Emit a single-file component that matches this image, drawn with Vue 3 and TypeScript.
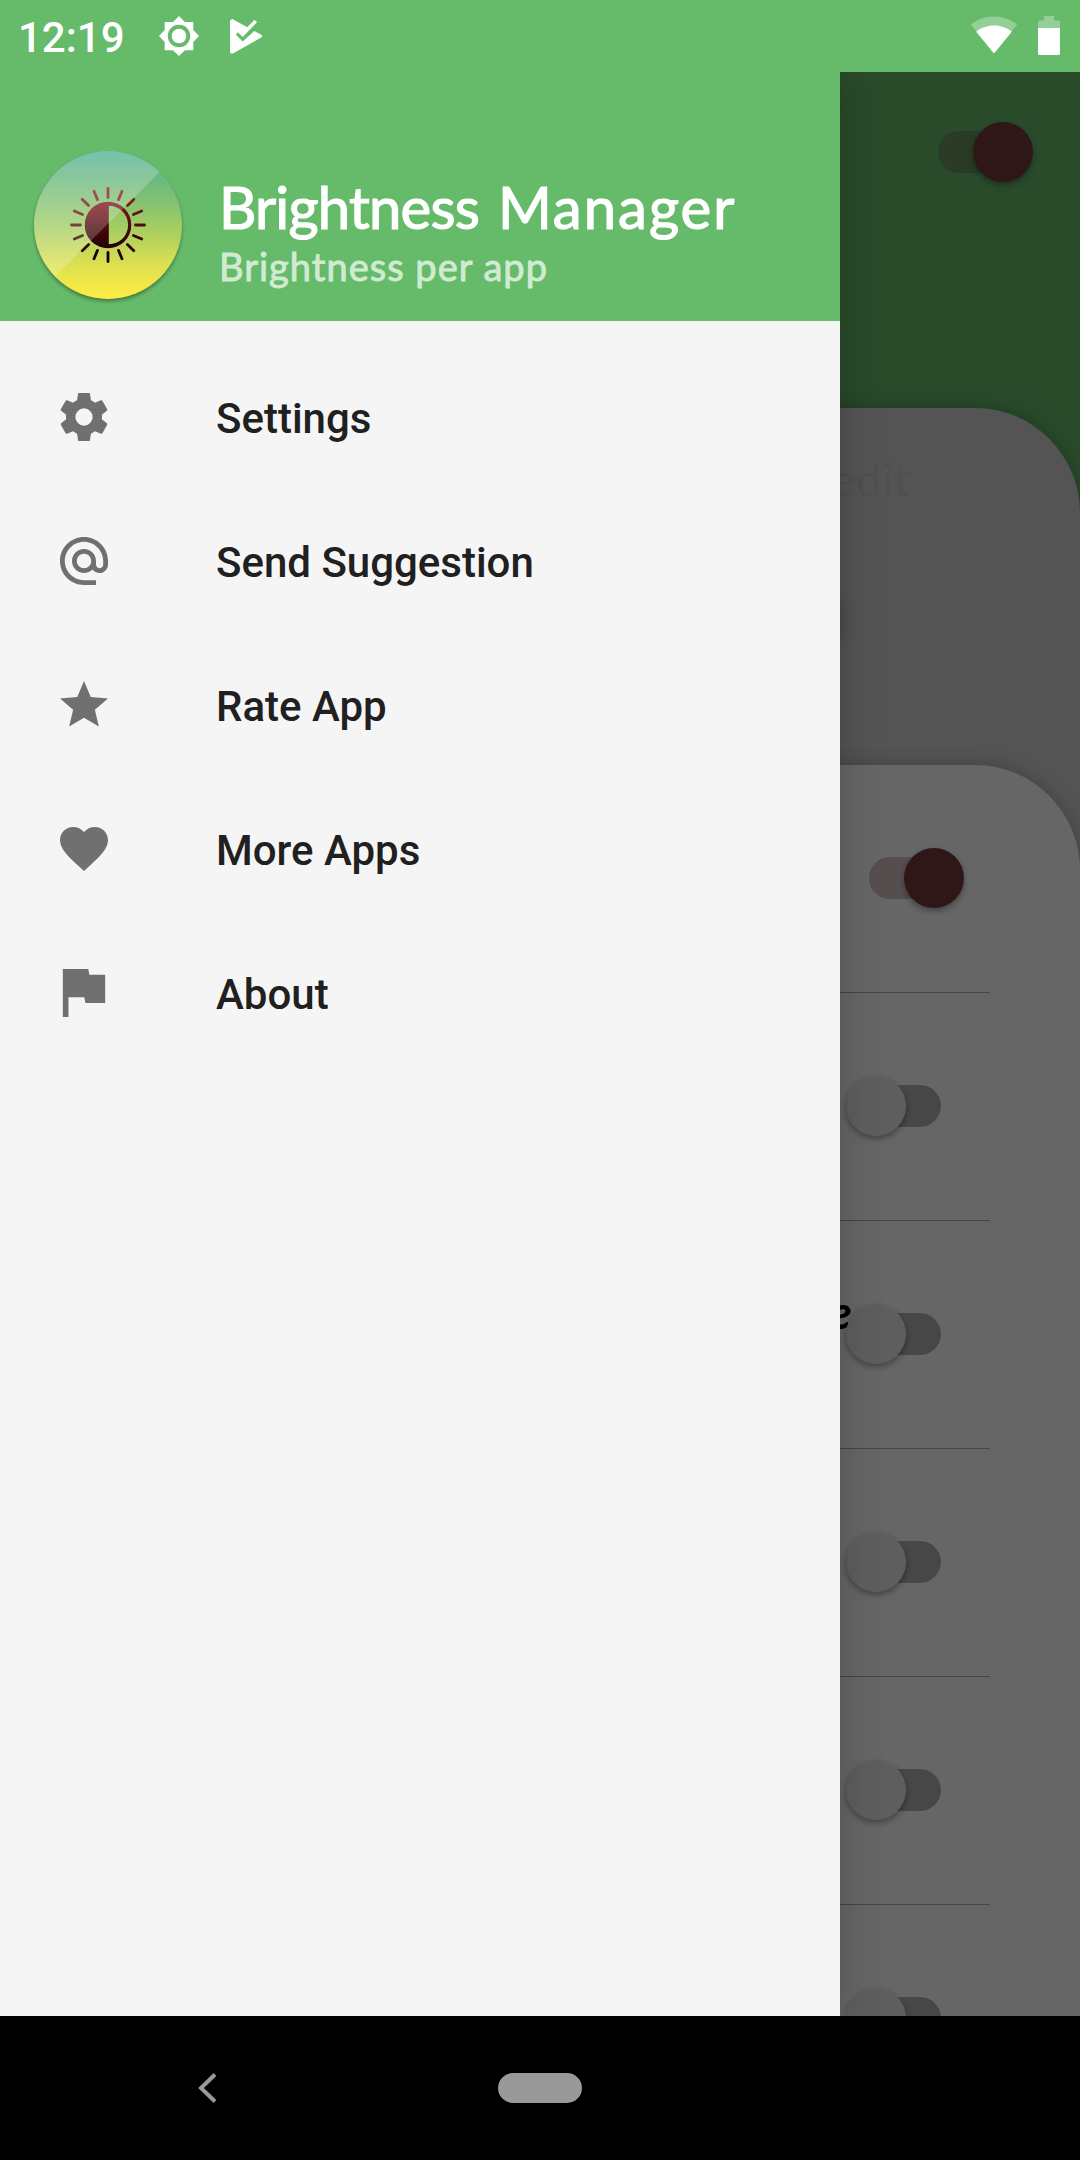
<script setup lang="ts">
interface MenuItem {
  label: string
  box: string
  path: string
}

interface AppRow {
  name: string
  on: boolean
}

const menu: MenuItem[] = [
  {
    label: 'Settings',
    box: '2 2 20 20',
    path: 'M19.43 12.98c.04-.32.07-.64.07-.98s-.03-.66-.07-.98l2.11-1.65c.19-.15.24-.42.12-.64l-2-3.46c-.12-.22-.39-.3-.61-.22l-2.49 1c-.52-.4-1.08-.73-1.69-.98l-.38-2.65C14.46 2.18 14.25 2 14 2h-4c-.25 0-.46.18-.49.42l-.38 2.65c-.61.25-1.17.59-1.69.98l-2.49-1c-.23-.09-.49 0-.61.22l-2 3.46c-.13.22-.07.49.12.64l2.11 1.65c-.04.32-.07.65-.07.98s.03.66.07.98l-2.11 1.65c-.19.15-.24.42-.12.64l2 3.46c.12.22.39.3.61.22l2.49-1c.52.4 1.08.73 1.69.98l.38 2.65c.03.24.24.42.49.42h4c.25 0 .46-.18.49-.42l.38-2.65c.61-.25 1.17-.59 1.69-.98l2.49 1c.23.09.49 0 .61-.22l2-3.46c.12-.22.07-.49-.12-.64l-2.11-1.65zM12 15.6A3.6 3.6 0 1 1 12 8.4a3.6 3.6 0 0 1 0 7.2z',
  },
  {
    label: 'Send Suggestion',
    box: '2 2 20 20',
    path: 'M12 2C6.48 2 2 6.48 2 12s4.48 10 10 10h5v-2h-5c-4.34 0-8-3.66-8-8s3.66-8 8-8 8 3.66 8 8v1.43c0 .79-.71 1.57-1.5 1.57s-1.5-.78-1.5-1.57V12c0-2.76-2.24-5-5-5s-5 2.24-5 5 2.24 5 5 5c1.38 0 2.64-.56 3.54-1.47.65.89 1.77 1.47 2.96 1.47 1.97 0 3.5-1.6 3.5-3.57V12c0-5.52-4.48-10-10-10zm0 13c-1.66 0-3-1.34-3-3s1.34-3 3-3 3 1.34 3 3-1.34 3-3 3z',
  },
  {
    label: 'Rate App',
    box: '2 2 20 20',
    path: 'M12 17.27L18.18 21l-1.64-7.03L22 9.24l-7.19-.61L12 2 9.19 8.63 2 9.24l5.46 4.73L5.82 21z',
  },
  {
    label: 'More Apps',
    box: '2 2.2 20 20',
    path: 'M12 21.35l-1.45-1.32C5.4 15.36 2 12.28 2 8.5 2 5.42 4.42 3 7.5 3c1.74 0 3.41.81 4.5 2.09C13.09 3.81 14.76 3 16.5 3 19.58 3 22 5.42 22 8.5c0 3.78-3.4 6.86-8.55 11.54L12 21.35z',
  },
  {
    label: 'About',
    box: '4 4 17 17',
    path: 'M14.4 6L14 4H5v17h2v-7h5.6l.4 2h7V6z',
  },
]

const rows: AppRow[] = [
  { name: '', on: true },
  { name: '', on: false },
  { name: 'e', on: false },
  { name: '', on: false },
  { name: '', on: false },
  { name: '', on: false },
]

const rays: number[] = Array.from({ length: 16 }, (_, i) => i * 22.5)
</script>

<template>
  <div class="screen">
    <header class="status">
      <span class="clock">12:19</span>
      <svg class="s-sun" width="40" height="40" viewBox="0 0 40 40">
        <path fill="#fff" fill-rule="evenodd" d="M20 0l6 5.9h8.3v8.2L40 20l-5.7 5.9v8.4H26L20 40l-6-5.7H5.700v-8.400L0 20l5.700-5.900V5.900H14zM20 8.800a11.200 11.200 0 1 0 0 22.400a11.200 11.200 0 0 0 0-22.400z" />
        <circle cx="20" cy="20" r="7.300" fill="#fff" />
      </svg>
      <svg class="s-play" width="33" height="35" viewBox="0 0 33 35">
        <path fill="#fff" d="M0 2.500C0 .6 1.700-.4 3.400.5L17.200 8.300 24.600 .8 27 3.200 12.700 17.900 7.700 13.200 5.800 15.400 12.700 22.500 24.300 11.900 31.300 15.800Q33 17 31.300 18.400L3.400 34.200C1.700 35.200 0 34.300 0 32.300z" />
      </svg>
      <span class="grow"></span>
      <svg class="s-wifi" width="46" height="38" viewBox="0 0 46 38">
        <path fill="#fff" fill-opacity=".3" d="M23 37.500L0 8.500C6 3.500 14 .5 23 .5s17 3 23 8z" />
        <path fill="#fff" d="M23 37.500L5.200 15.700C10 12 16 9.600 23 9.600s13 2.400 17.800 6.100L24 36.300q-1 1.200-2 0z" />
      </svg>
      <svg class="s-batt" width="22" height="39" viewBox="0 0 22 39">
        <path fill="#fff" fill-opacity=".3" d="M6 0h10v4.500h4.500Q22 4.500 22 6v6H0V6q0-1.500 1.500-1.500H6z" />
        <path fill="#fff" d="M0 12h22v25.500q0 1.500-1.500 1.500h-19Q0 39 0 37.500z" />
      </svg>
    </header>

    <main class="stage">
      <section class="page">
        <div class="toolbar">
          <div class="switch on"><i class="track"></i><i class="thumb"></i></div>
        </div>
        <div class="panel">
          <div class="hint">edit</div>
          <div class="fab-line"><span class="fab"></span></div>
          <div class="list">
            <div v-for="(row, i) in rows" :key="i" class="row" :class="{ first: row.on }">
              <span class="name">{{ row.name }}</span>
              <div class="switch" :class="{ on: row.on }"><i class="track"></i><i class="thumb"></i></div>
            </div>
          </div>
        </div>
      </section>
      <div class="scrim"></div>

      <aside class="drawer">
        <div class="head">
          <svg class="logo" width="160" height="164" viewBox="-80 -80 160 164">
            <defs>
              <linearGradient id="sky" x1="0" y1="0" x2="0" y2="1">
                <stop offset="0" stop-color="#4fb096" />
                <stop offset=".2" stop-color="#6bb97e" />
                <stop offset=".5" stop-color="#a0cc63" />
                <stop offset=".78" stop-color="#dfe14f" />
                <stop offset="1" stop-color="#ffec42" />
              </linearGradient>
              <linearGradient id="wine" gradientUnits="userSpaceOnUse" x1="0" y1="-38" x2="0" y2="38">
                <stop offset="0" stop-color="#8e2028" />
                <stop offset=".3" stop-color="#741219" />
                <stop offset=".65" stop-color="#360508" />
                <stop offset="1" stop-color="#0c0102" />
              </linearGradient>
              <clipPath id="disc"><circle r="74" /></clipPath>
              <filter id="soft" x="-20%" y="-20%" width="140%" height="140%"><feGaussianBlur stdDeviation="2.200" /></filter>
            </defs>
            <circle cy="2.500" r="73.500" fill="#000" fill-opacity=".4" filter="url(#soft)" />
            <circle r="74" fill="url(#sky)" />
            <path fill="url(#wine)" fill-rule="evenodd" d="M0-23.300a23.300 23.300 0 1 0 0 46.600a23.300 23.300 0 0 0 0-46.600zM.8-19.300a19.300 19.300 0 0 1 0 38.600z" />
            <!-- the rays are cut from one gradient-filled square so they shade as a whole -->
            <mask id="raymask" maskUnits="userSpaceOnUse" x="-40" y="-40" width="80" height="80">
              <path v-for="a in rays" :key="a" d="M0-27.500V-36.500" stroke="#fff" stroke-width="2.800" stroke-linecap="round" :transform="`rotate(${a})`" />
            </mask>
            <rect x="-40" y="-40" width="80" height="80" fill="url(#wine)" mask="url(#raymask)" />
            <path d="M-80-80H26.500L52-53.300-52 50.700-80 79.500z" fill="#fff" fill-opacity=".22" clip-path="url(#disc)" />
          </svg>
          <div class="titles">
            <div class="title"><span class="w1">Brightness</span> <span class="w2">Manager</span></div>
            <div class="sub">Brightness per app</div>
          </div>
        </div>
        <nav class="menu">
          <div v-for="item in menu" :key="item.label" class="item">
            <svg width="48" height="48" :viewBox="item.box"><path fill="#707070" :d="item.path" /></svg>
            <span>{{ item.label }}</span>
          </div>
        </nav>
      </aside>
    </main>

    <footer class="navbar">
      <svg class="back" width="20" height="32" viewBox="0 0 20 32">
        <path d="M17 2.500L3 16 17 29.500" fill="none" stroke="#999" stroke-width="4" />
      </svg>
      <span class="home"></span>
    </footer>
  </div>
</template>

<style>
body {
  margin: 0;
}
</style>

<style scoped>
.screen {
  width: 1080px;
  height: 2160px;
  display: flex;
  flex-direction: column;
  overflow: hidden;
  background: #000;
  font-family: Roboto, sans-serif;
}
.status {
  height: 72px;
  flex: none;
  display: flex;
  align-items: flex-start;
  background: #66bb6a;
  color: #fff;
}
.clock {
  width: 141px;
  padding-left: 18px;
  line-height: 76px;
  font-size: 42px;
  font-weight: 500;
}
.s-sun { margin-top: 16px; }
.s-play { margin: 19px 0 0 31px; }
.grow { flex: 1; }
.s-wifi { margin: 16px 21px 0 0; }
.s-batt { margin: 16px 20px 0 0; }
.stage {
  position: relative;
  height: 1944px;
  flex: none;
  overflow: hidden;
}
.page {
  height: 1944px;
  background: #66bb6a;
}
.toolbar {
  height: 336px;
  display: flex;
  justify-content: flex-end;
  box-sizing: border-box;
  padding: 50px 46px 0 0;
}
.panel {
  background: #d2d2d2;
  border-radius: 0 105px 0 0;
  box-shadow: 0 0 20px rgba(0, 0, 0, 0.24);
}
.hint {
  height: 182px;
  padding-right: 169px;
  line-height: 142px;
  text-align: right;
  font-family: Lato, sans-serif;
  font-size: 45px;
  letter-spacing: 1px;
  color: #c8c8c8;
}
.fab-line {
  height: 175px;
}
.fab {
  display: block;
  width: 60px;
  height: 60px;
  margin-left: 780px;
  border-radius: 50%;
  box-shadow: 0 0 16px rgba(0, 0, 0, 0.3);
}
.list {
  background: #fff;
  border-radius: 0 105px 0 0;
  box-shadow: 0 0 20px rgba(0, 0, 0, 0.24);
}
.row {
  width: 990px;
  height: 228px;
  box-sizing: border-box;
  padding: 0 49px 1px 0;
  border-bottom: 1px solid #acacac;
  display: flex;
  align-items: center;
}
.row.first {
  padding-right: 25px;
}
.name {
  flex: 1;
  margin-right: -7px;
  padding-bottom: 46px;
  text-align: right;
  font-family: Lato, sans-serif;
  font-size: 46px;
  font-weight: 700;
  font-style: italic;
  color: #000;
}
.switch {
  position: relative;
  width: 96px;
  height: 60px;
  flex: none;
  display: flex;
  align-items: center;
  justify-content: flex-end;
}
.track {
  width: 84px;
  height: 42px;
  border-radius: 21px;
  background: rgba(0, 0, 0, 0.3);
}
.thumb {
  position: absolute;
  left: 0.5px;
  top: 0.3px;
  width: 60px;
  height: 60px;
  border-radius: 50%;
  background: #ececec;
  box-shadow: 0 3px 6px rgba(0, 0, 0, 0.35);
}
.switch.on {
  justify-content: flex-start;
}
.on .track {
  background: rgba(118, 58, 60, 0.3);
}
.on .thumb {
  left: 35.4px;
  background: #763a3c;
}
.scrim {
  position: absolute;
  inset: 0;
  background: rgba(0, 0, 0, 0.6);
}
.drawer {
  position: absolute;
  left: 0;
  top: 0;
  width: 840px;
  height: 1944px;
  background: #f5f5f5;
  box-shadow: 0 0 40px rgba(0, 0, 0, 0.22);
}
.head {
  height: 249px;
  display: flex;
  align-items: flex-start;
  background: #66bb6a;
}
.logo {
  margin: 73px 0 0 28px;
}
.titles {
  padding: 99px 0 0 31px;
  font-family: Lato, sans-serif;
  white-space: nowrap;
}
.title {
  line-height: 72px;
  font-size: 58px;
  color: #fff;
  -webkit-text-stroke: 1.2px #fff;
}
.w1 {
  letter-spacing: -0.8px;
}
.w2 {
  margin-left: 4px;
  letter-spacing: 2px;
}
.sub {
  line-height: 46px;
  font-size: 38px;
  letter-spacing: 1px;
  color: #d1ebd2;
  -webkit-text-stroke: 0.9px #d1ebd2;
}
.menu {
  padding-top: 24px;
}
.item {
  height: 144px;
  display: flex;
  align-items: center;
  padding-left: 60px;
  gap: 108px;
  font-size: 42px;
  font-weight: 500;
  color: #202020;
}
.item span {
  padding-top: 3px;
}
.navbar {
  height: 144px;
  flex: none;
  display: flex;
  align-items: center;
  background: #000;
}
.back {
  margin-left: 198px;
}
.home {
  width: 84px;
  height: 30px;
  margin-left: 280px;
  border-radius: 15px;
  background: #999;
}
</style>
